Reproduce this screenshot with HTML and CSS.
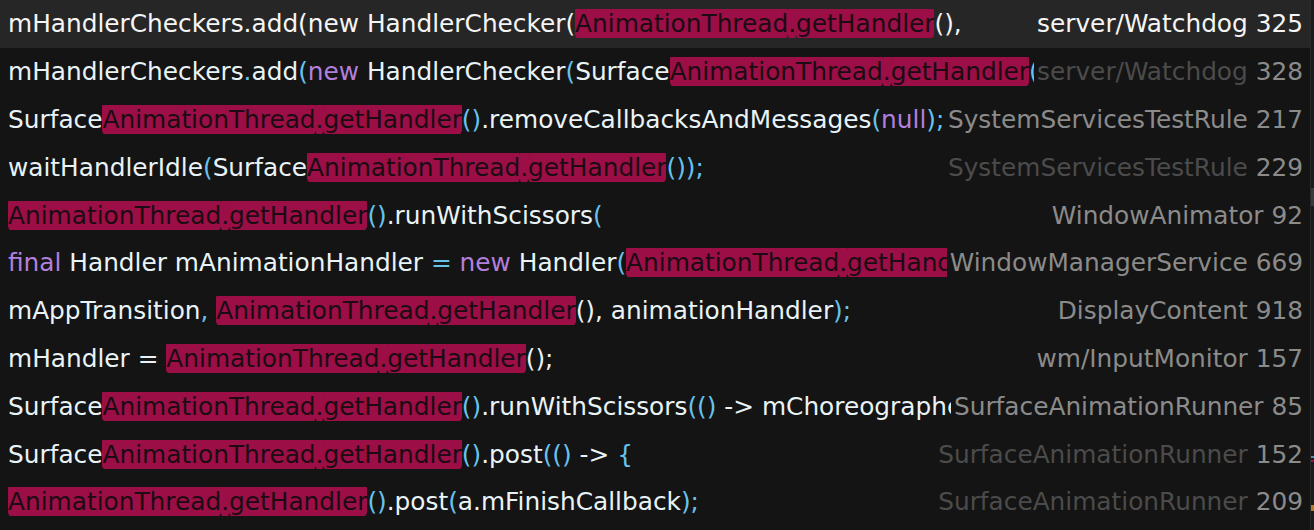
FILE: index.html
```html
<!DOCTYPE html>
<html lang="en">
<head>
    <meta charset="UTF-8">
    <title>Find usages</title>
    <link rel="stylesheet" href="styles.css">
</head>
<body>
    <div class="panel">
        <ul class="results">
            <li class="row selected">
                <div class="code">mHandlerCheckers.add(new HandlerChecker(<span class="hl">AnimationThread</span><span class="hl">.</span><span class="hl">getHandler</span>(),</div>
                <div class="loc">server/Watchdog 325</div>
            </li>
            <li class="row">
                <div class="code">mHandlerCheckers<span class="p">.</span>add<span class="p">(</span><span class="k">new</span> HandlerChecker<span class="p">(</span>Surface<span class="hl">AnimationThread</span><span class="hl">.</span><span class="hl">getHandler</span><span class="p">()));</span></div>
                <div class="loc"><span class="dim">server/Watchdog</span> 328</div>
            </li>
            <li class="row">
                <div class="code">Surface<span class="hl">AnimationThread</span><span class="hl">.</span><span class="hl">getHandler</span><span class="p">()</span>.removeCallbacksAndMessages<span class="p">(</span><span class="k">null</span><span class="p">);</span></div>
                <div class="loc">SystemServicesTestRule 217</div>
            </li>
            <li class="row">
                <div class="code">waitHandlerIdle<span class="p">(</span>Surface<span class="hl">AnimationThread</span><span class="hl">.</span><span class="hl">getHandler</span><span class="p">());</span></div>
                <div class="loc"><span class="dim">SystemServicesTestRule</span> 229</div>
            </li>
            <li class="row">
                <div class="code"><span class="hl">AnimationThread</span><span class="hl">.</span><span class="hl">getHandler</span><span class="p">()</span>.runWithScissors<span class="p">(</span></div>
                <div class="loc">WindowAnimator 92</div>
            </li>
            <li class="row">
                <div class="code"><span class="k">final</span> Handler mAnimationHandler <span class="p">=</span> <span class="k">new</span> Handler<span class="p">(</span><span class="hl">AnimationThread</span><span class="hl">.</span><span class="hl">getHandler</span><span class="p">());</span></div>
                <div class="loc">WindowManagerService 669</div>
            </li>
            <li class="row">
                <div class="code">mAppTransition<span class="p">,</span> <span class="hl">AnimationThread</span><span class="hl">.</span><span class="hl">getHandler</span>(), animationHandler<span class="p">);</span></div>
                <div class="loc">DisplayContent 918</div>
            </li>
            <li class="row">
                <div class="code">mHandler = <span class="hl">AnimationThread</span><span class="hl">.</span><span class="hl">getHandler</span>();</div>
                <div class="loc">wm/InputMonitor 157</div>
            </li>
            <li class="row">
                <div class="code">Surface<span class="hl">AnimationThread</span><span class="hl">.</span><span class="hl">getHandler</span><span class="p">()</span>.runWithScissors<span class="p">(()</span> -&gt; mChoreographer.postFrameCallback(</div>
                <div class="loc">SurfaceAnimationRunner 85</div>
            </li>
            <li class="row">
                <div class="code">Surface<span class="hl">AnimationThread</span><span class="hl">.</span><span class="hl">getHandler</span><span class="p">()</span>.post<span class="p">(()</span> -&gt; <span class="p">{</span></div>
                <div class="loc"><span class="dim">SurfaceAnimationRunner</span> 152</div>
            </li>
            <li class="row">
                <div class="code"><span class="hl">AnimationThread</span><span class="hl">.</span><span class="hl">getHandler</span><span class="p">()</span>.post<span class="p">(</span>a.mFinishCallback<span class="p">);</span></div>
                <div class="loc"><span class="dim">SurfaceAnimationRunner</span> 209</div>
            </li>
        </ul>
        <div class="gutter">
            <span class="thumb"></span>
            <span class="mark blue"></span>
            <span class="mark pink"></span>
            <span class="mark orange"></span>
        </div>
    </div>
</body>
</html>
```

FILE: styles.css
```css
* {
    margin: 0;
    padding: 0;
    box-sizing: border-box;
}

body {
    background: #141414;
    font-family: "DejaVu Sans", "Liberation Sans", sans-serif;
    font-size: 24.8px;
    color: #e9f3f6;
    overflow: hidden;
}

.panel {
    display: flex;
    height: 530px;
}

.results {
    flex: 1;
    min-width: 0;
    list-style: none;
}

.row {
    display: flex;
    align-items: center;
    height: 47.8px;
    padding: 0 7px 0 8px;
    white-space: nowrap;
}

.row.selected {
    background: #262626;
    color: #f5f5f5;
}

.code {
    flex: 1;
    min-width: 0;
    overflow: hidden;
}

.loc {
    flex-shrink: 0;
    margin-left: 3px;
    color: #8b8b8b;
}

.loc .dim {
    color: #4b4b4b;
}

.selected .loc {
    color: #f5f5f5;
}

/* 语法颜色 */
.p { color: #66c3ee; }
.k { color: #b27fdc; }

.hl {
    background: #9b0e46;
    color: #1a0c12;
    border-radius: 5px;
    padding: 3px 0 1px;
}

.gutter {
    position: relative;
    width: 4px;
    background: #1a1a1a;
    border-left: 1px solid #2a2a2a;
}

.thumb {
    position: absolute;
    left: 0;
    top: 188px;
    width: 3px;
    height: 18px;
    background: #3a3a3a;
}

.mark {
    position: absolute;
    left: 0;
    width: 3px;
    height: 2px;
}

.blue { top: 456px; background: #4a8fb8; }
.pink { top: 460px; background: #9b0e46; }
.orange { top: 505px; background: #b07a2a; height: 6px; }
```
